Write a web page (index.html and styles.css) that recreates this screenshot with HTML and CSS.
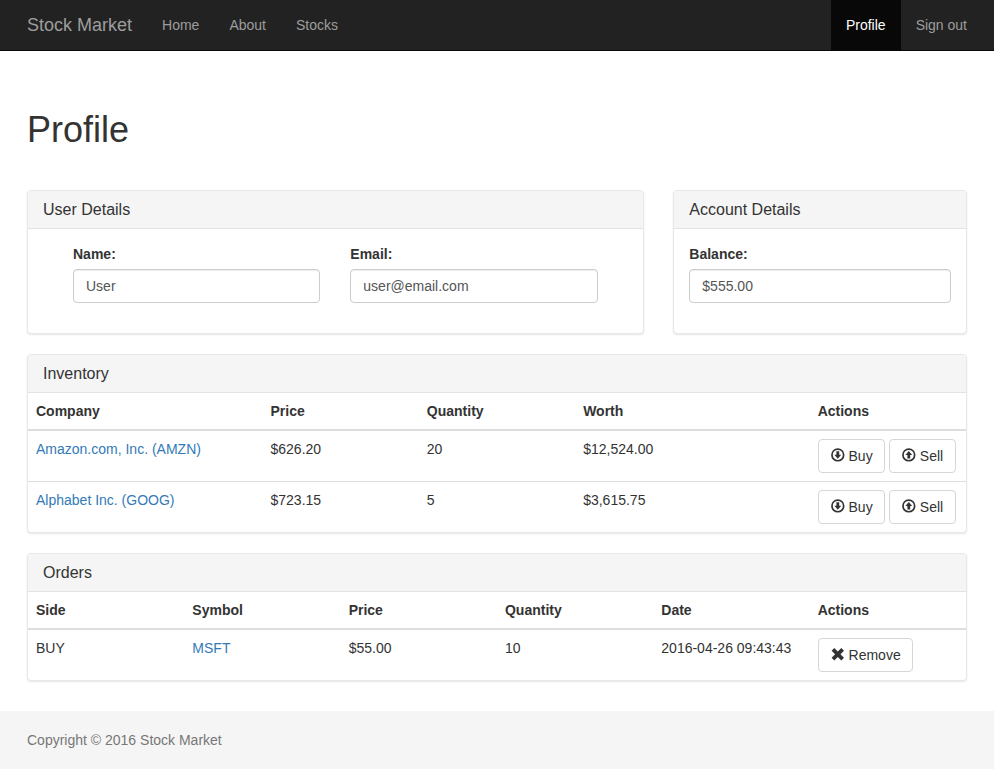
FILE: index.html
```html
<!DOCTYPE html>
<html lang="en">
<head>
<meta charset="utf-8">
<title>Profile - Stock Market</title>
<link rel="stylesheet" href="styles.css">
</head>
<body>
<nav class="navbar">
  <div class="nav-left">
    <a class="brand" href="#">Stock Market</a>
    <a class="nav-link" href="#">Home</a>
    <a class="nav-link" href="#">About</a>
    <a class="nav-link" href="#">Stocks</a>
  </div>
  <div class="nav-right">
    <a class="nav-link active" href="#">Profile</a>
    <a class="nav-link" href="#">Sign out</a>
  </div>
</nav>
<main class="container">
  <h1 class="page-title">Profile</h1>
  <div class="top-row">
    <section class="panel">
      <h2 class="panel-heading">User Details</h2>
      <div class="panel-body user-fields">
        <div class="form-group">
          <label class="field-label" for="name">Name:</label>
          <input class="form-control" id="name" value="User">
        </div>
        <div class="form-group">
          <label class="field-label" for="email">Email:</label>
          <input class="form-control" id="email" value="user@email.com">
        </div>
      </div>
    </section>
    <section class="panel">
      <h2 class="panel-heading">Account Details</h2>
      <div class="panel-body">
        <div class="form-group">
          <label class="field-label" for="balance">Balance:</label>
          <input class="form-control" id="balance" value="$555.00">
        </div>
      </div>
    </section>
  </div>
  <section class="panel">
    <h2 class="panel-heading">Inventory</h2>
    <table class="table">
      <colgroup><col class="w25"><col class="w16"><col class="w16"><col class="w25"><col class="w16"></colgroup>
      <thead>
        <tr><th>Company</th><th>Price</th><th>Quantity</th><th>Worth</th><th>Actions</th></tr>
      </thead>
      <tbody>
        <tr>
          <td><a class="link" href="#">Amazon.com, Inc. (AMZN)</a></td><td>$626.20</td><td>20</td><td>$12,524.00</td>
          <td class="actions">
            <button class="btn" type="button"><svg class="icon" viewBox="0 0 14 14"><path fill-rule="evenodd" d="M6.800.2a6.700 6.700 0 1 0 0 13.400 6.700 6.700 0 0 0 0-13.400zM6.800 1.900a5 5 0 1 1 0 10 5 5 0 0 1 0-10z"/><path d="M5.400 3.200h2.800v3.500h2L6.800 10.700 3.400 6.700h2z"/></svg> Buy</button>
            <button class="btn" type="button"><svg class="icon" viewBox="0 0 14 14"><path fill-rule="evenodd" d="M6.800.2a6.700 6.700 0 1 0 0 13.400 6.700 6.700 0 0 0 0-13.400zM6.800 1.900a5 5 0 1 1 0 10 5 5 0 0 1 0-10z"/><path d="M5.400 10.600h2.800V7.100h2L6.800 3.100 3.400 7.100h2z"/></svg> Sell</button>
          </td>
        </tr>
        <tr>
          <td><a class="link" href="#">Alphabet Inc. (GOOG)</a></td><td>$723.15</td><td>5</td><td>$3,615.75</td>
          <td class="actions">
            <button class="btn" type="button"><svg class="icon" viewBox="0 0 14 14"><path fill-rule="evenodd" d="M6.800.2a6.700 6.700 0 1 0 0 13.400 6.700 6.700 0 0 0 0-13.400zM6.800 1.900a5 5 0 1 1 0 10 5 5 0 0 1 0-10z"/><path d="M5.400 3.200h2.800v3.500h2L6.800 10.700 3.400 6.700h2z"/></svg> Buy</button>
            <button class="btn" type="button"><svg class="icon" viewBox="0 0 14 14"><path fill-rule="evenodd" d="M6.800.2a6.700 6.700 0 1 0 0 13.400 6.700 6.700 0 0 0 0-13.400zM6.800 1.900a5 5 0 1 1 0 10 5 5 0 0 1 0-10z"/><path d="M5.400 10.600h2.800V7.100h2L6.800 3.100 3.400 7.100h2z"/></svg> Sell</button>
          </td>
        </tr>
      </tbody>
    </table>
  </section>
  <section class="panel">
    <h2 class="panel-heading">Orders</h2>
    <table class="table">
      <colgroup><col class="w16"><col class="w16"><col class="w16"><col class="w16"><col class="w16"><col class="w16"></colgroup>
      <thead>
        <tr><th>Side</th><th>Symbol</th><th>Price</th><th>Quantity</th><th>Date</th><th>Actions</th></tr>
      </thead>
      <tbody>
        <tr>
          <td>BUY</td><td><a class="link" href="#">MSFT</a></td><td>$55.00</td><td>10</td><td>2016-04-26 09:43:43</td>
          <td class="actions">
            <button class="btn" type="button"><svg class="icon" viewBox="0 0 14 14"><path d="M3.300 1 6.800 4.500 10.300 1 13 3.700 9.500 7.200 13 10.700 10.300 13.400 6.800 9.900 3.300 13.400.6 10.700 4.100 7.200.6 3.700z"/></svg> Remove</button>
          </td>
        </tr>
      </tbody>
    </table>
  </section>
</main>
<footer class="footer">
  <p class="copyright">Copyright © 2016 Stock Market</p>
</footer>
</body>
</html>
```
FILE: styles.css
```css
* { box-sizing: border-box; }
html, body { margin: 0; padding: 0; }
body {
  font-family: "Liberation Sans", Arial, sans-serif;
  font-size: 14px;
  line-height: 20px;
  color: #333;
  background: #fff;
}
.navbar {
  display: flex;
  justify-content: space-between;
  height: 51px;
  padding: 0 12px;
  background: #222;
  border-bottom: 1px solid #080808;
}
.nav-left, .nav-right { display: flex; }
.brand {
  padding: 15px;
  font-size: 18px;
  color: #9d9d9d;
  text-decoration: none;
}
.nav-link {
  padding: 15px;
  color: #9d9d9d;
  text-decoration: none;
}
.nav-link.active { color: #fff; background: #080808; }
.container { padding: 0 27px; }
.page-title {
  margin: 0;
  padding: 59px 0 0;
  height: 139px;
  font-size: 36px;
  font-weight: 500;
  line-height: 40px;
  color: #333;
}
.top-row {
  display: grid;
  grid-template-columns: 616.67px 293.67px;
  column-gap: 29.66px;
}
.panel {
  margin-bottom: 20px;
  background: #fff;
  border: 1px solid #e8e8e8;
  border-radius: 4px;
  box-shadow: 0 1px 2px rgba(0,0,0,.1);
}
.panel-heading {
  margin: 0;
  padding: 10px 15px 9px;
  height: 38px;
  font-size: 16px;
  font-weight: 500;
  line-height: 18px;
  color: #333;
  background: #f5f5f5;
  border-bottom: 1px solid #e3e3e3;
  border-radius: 3px 3px 0 0;
}
.panel-body { padding: 15px; }
.user-fields {
  display: grid;
  grid-template-columns: 1fr 1fr;
  column-gap: 30px;
  padding-left: 45px;
  padding-right: 45px;
}
.form-group { margin-bottom: 15px; }
.field-label {
  display: block;
  margin-bottom: 5px;
  font-weight: 700;
}
.form-control {
  display: block;
  width: 100%;
  height: 34px;
  padding: 6px 12px;
  font: inherit;
  color: #555;
  background: #fff;
  border: 1px solid #ccc;
  border-radius: 4px;
  box-shadow: inset 0 1px 1px rgba(0,0,0,.075);
}
.table {
  width: 100%;
  table-layout: fixed;
  border-collapse: collapse;
}
.w25 { width: 25%; }
.w16 { width: 16.6667%; }
.table th, .table td {
  padding: 8px;
  text-align: left;
  vertical-align: top;
}
.table th {
  font-weight: 700;
  border-bottom: 2px solid #ddd;
}
.table tbody tr + tr td { border-top: 1px solid #ddd; }
.link { color: #337ab7; text-decoration: none; }
.actions { white-space: nowrap; }
.btn {
  display: inline-block;
  height: 34px;
  padding: 6px 11.4px 6px 12px;
  font: inherit;
  color: #333;
  background: #fff;
  border: 1px solid #d6d6d6;
  border-radius: 4px;
}
.icon {
  display: inline-block;
  width: 14px;
  height: 14px;
  vertical-align: -1px;
  fill: #333;
}
.footer {
  margin-top: 30px;
  height: 58px;
  padding: 19px 27px;
  background: #f5f5f5;
}
.copyright { margin: 0; color: #777; }
```
